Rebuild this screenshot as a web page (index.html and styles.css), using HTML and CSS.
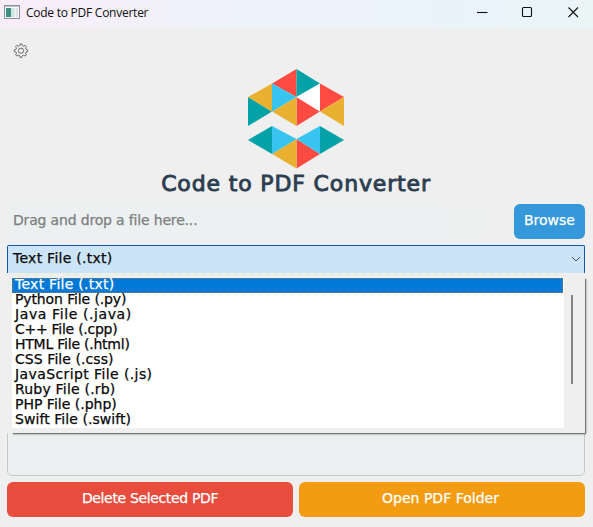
FILE: index.html
```
<!DOCTYPE html>
<html lang="en">
<head>
<meta charset="utf-8">
<title>Code to PDF Converter</title>
<link rel="stylesheet" href="styles.css">
</head>
<body>
<header class="titlebar">
  <svg class="app-icon" width="16" height="14" viewBox="0 0 16 14"><rect x=".5" y=".5" width="15" height="13" fill="#f4f6f7" stroke="#8d9499"/><path d="M1 1.5h14" stroke="#b9c6d0"/><rect x="2" y="3" width="5" height="9" fill="#3f8f85"/><rect x="7" y="3" width="4" height="9" fill="#d3e6e2"/><rect x="12" y="3" width="2" height="9" fill="#dfe3e8"/></svg>
  <span class="window-title">Code to PDF Converter</span>
  <svg class="controls" width="104" height="12" viewBox="0 0 104 12" fill="none" stroke="#111" stroke-width="1.1"><path d="M0 6.5h10.500"/><rect x="45.500" y="1.500" width="9" height="9" rx="1"/><path d="M91.500 1.500l9.500 9.500M101 1.500l-9.500 9.500"/></svg>
</header>
<main class="app">
  <svg class="gear" width="16" height="16" viewBox="0 0 16 16" fill="none" stroke="#6a6a6a" stroke-linejoin="round"><path d="M6.700 2.700L7.100 1h1.800l.4 1.700 1.300.5 1.500-.9 1.300 1.300-.9 1.500.5 1.300 1.700.4v1.800l-1.700.4-.5 1.300.9 1.500-1.300 1.300-1.500-.9-1.300.5-.4 1.700H7.100l-.4-1.700-1.300-.5-1.500.9-1.300-1.300.9-1.500-.5-1.300-1.700-.4V6.800L3 6.400l.5-1.300-.9-1.500 1.300-1.300 1.500.9z"/><circle cx="8" cy="7.700" r="2.600"/></svg>
  <svg class="logo" width="96" height="100" viewBox="0 0 96 100">
    <g fill="#ff4b42"><path d="M48.500 0v28L24 14.500z"/><path d="M72 14.500L96 28 72 42.500z"/><path d="M48.500 28L72 42.500 48.500 57z"/><path d="M48.500 70L72 85 48.500 99.500z"/></g>
    <g fill="#02a2a6"><path d="M48.500 0L72 14.500 48.500 28z"/><path d="M0 28l24 14.500L0 57z"/><path d="M24 57v28L0 71z"/><path d="M72 57l24 14-24 14z"/></g>
    <g fill="#eab02f"><path d="M24 14.500v28L0 28z"/><path d="M48.500 28v29L24 42.500z"/><path d="M96 28v29L72 42.500z"/><path d="M48.500 70v29.500L24 85z"/></g>
    <g fill="#37c4ef"><path d="M24 14.500L48.500 28 24 42.500z"/><path d="M24 57l24.500 13L24 85z"/><path d="M72 57v28L48.500 70z"/></g>
    <path d="M72 14.500v28L48.500 28z" fill="#fff"/>
  </svg>
  <h1 class="heading">Code to PDF Converter</h1>
  <div class="file-row"><div class="dropzone">Drag and drop a file here...</div><button class="btn browse">Browse</button></div>
  <div class="combo">
    <span class="combo-text">Text File (.txt)</span>
    <svg width="10" height="6" viewBox="0 0 10 6" fill="none" stroke="#42505c"><path d="M1 1l4 4 4-4"/></svg>
    <div class="popup">
      <ul class="list">
        <li class="selected"><span class="txt">Text File (.txt)</span></li>
        <li><span class="python">Python File (.py)</span></li>
        <li><span class="java">Java File (.java)</span></li>
        <li><span class="cpp">C++ File (.cpp)</span></li>
        <li><span class="html">HTML File (.html)</span></li>
        <li><span class="css">CSS File (.css)</span></li>
        <li><span class="js">JavaScript File (.js)</span></li>
        <li><span class="ruby">Ruby File (.rb)</span></li>
        <li><span>PHP File (.php)</span></li>
        <li><span class="swift">Swift File (.swift)</span></li>
      </ul>
      <div class="thumb"></div>
    </div>
  </div>
  <div class="panel"></div>
  <div class="actions"><button class="btn delete">Delete Selected PDF</button><button class="btn open">Open PDF Folder</button></div>
</main>
</body>
</html>
```
FILE: styles.css
```
* { box-sizing: border-box; }
body { margin: 0; height: 527px; overflow: hidden; background: #efefef; font: 14px/15px "DejaVu Sans", sans-serif; color: #080808; -webkit-text-stroke: .25px; }
.titlebar { height: 28px; display: flex; align-items: center; padding: 0 12px 4px 4px; background: linear-gradient(90deg, #f9edf7, #eff2fb 35%, #e9f3fa 80%, #eaf5f6); }
.window-title { margin: 2px auto 0 6px; font: 12px/16px "Open Sans", sans-serif; letter-spacing: -.25px; color: #111; -webkit-text-stroke: 0; }
.controls { flex: none; }
.app { height: 499px; padding: 15px 8px 10px 7px; display: flex; flex-direction: column; }
.gear { margin-left: 6px; flex: none; }
.logo { margin: 10px 0 0 241px; flex: none; }
.heading { margin: 2px 0 0; height: 26px; text-align: center; font-size: 22px; line-height: 26px; letter-spacing: .85px; color: #2c3e50; font-weight: normal; -webkit-text-stroke: .9px #2c3e50; }
.file-row { display: flex; margin-top: 7px; height: 35px; flex: none; gap: 6px; }
.dropzone { flex: 1; padding: 0 6px; line-height: 32px; letter-spacing: -.17px; color: #7d8080; background: linear-gradient(90deg, #ecf0f1 80%, #efefef); }
.btn { border: 0; border-radius: 6px; padding: 0 0 3px; color: #fff; font: 14px/15px "DejaVu Sans", sans-serif; -webkit-text-stroke: .25px; }
.browse { width: 71px; background: #3498db; }
.combo { position: relative; isolation: isolate; margin-top: 6px; height: 28px; flex: none; display: flex; align-items: center; justify-content: space-between; padding: 0 3px 1px 5px; background: #cce4f7; border: 1px solid #0a5ca5; border-bottom: 0; border-radius: 2px 2px 0 0; }
.combo-text { letter-spacing: .27px; padding-bottom: 1px; }
.popup { position: absolute; left: -1px; top: 27px; width: 578px; height: 160px; padding: 5px 12px 5px 5px; display: flex; justify-content: space-between; background: #efefef; }
.popup::before { content: ""; position: absolute; inset: 6px -1px -1px 6px; z-index: -1; background: #777; box-shadow: 0 0 2px #777; }
.list { margin: 0; padding: 0; width: 552px; list-style: none; background: #fff; }
.list li { height: 15px; padding-left: 3px; line-height: 13px; white-space: nowrap; }
.list .selected { width: 551px; padding-left: 2px; line-height: 11px; color: #fff; background: #0078d7; border: 1px dotted #8d7c60; }
.txt { letter-spacing: .27px; }
.python { letter-spacing: -.12px; }
.java { letter-spacing: .6px; }
.cpp { letter-spacing: -.27px; }
.html { letter-spacing: -.23px; }
.css { letter-spacing: .07px; }
.js { letter-spacing: .4px; }
.ruby { letter-spacing: .2px; }
.swift { letter-spacing: .06px; }
.thumb { width: 2px; height: 89px; margin: 17px 0 0; background: #858585; }
.panel { flex: 1; margin-top: 6px; border: 1px solid #c4c8c9; border-radius: 5px; background: #ecf0f1; }
.actions { display: grid; grid-template-columns: 1fr 1fr; gap: 6px; height: 35px; margin-top: 6px; flex: none; }
.delete { background: #e74c3c; letter-spacing: -.35px; }
.open { background: #f39c12; padding-right: 3px; }
```
